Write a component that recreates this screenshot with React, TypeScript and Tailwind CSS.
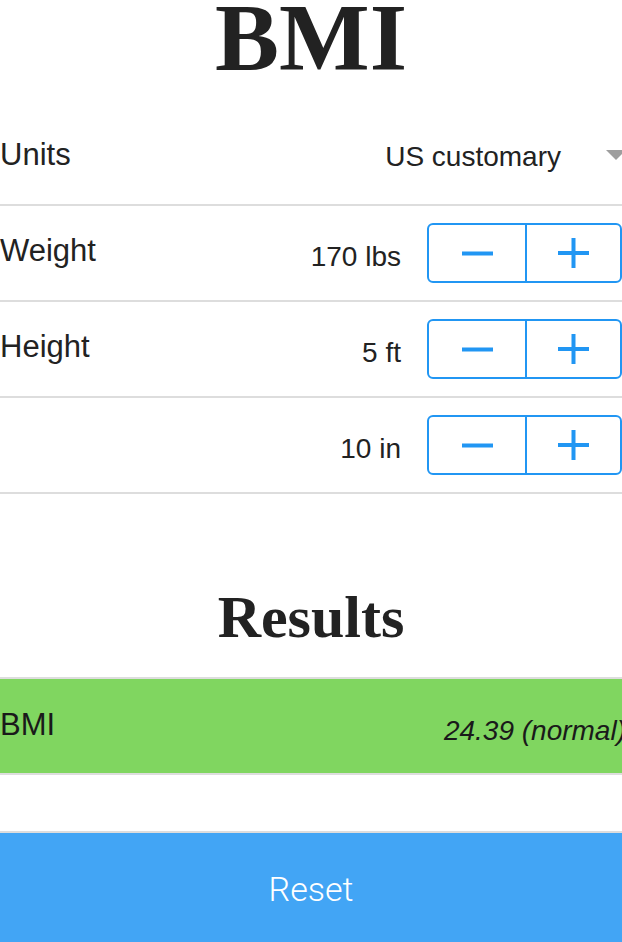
import React from "react";

function Minus() {
  return (
    <svg width="31" height="5" viewBox="0 0 31 5">
      <rect x="0" y="0.5" width="31" height="4" fill="#2196f3" />
    </svg>
  );
}

function Plus() {
  return (
    <svg width="31" height="30" viewBox="0 0 31 30">
      <rect x="0" y="13" width="31" height="4" fill="#2196f3" />
      <rect x="13.5" y="0" width="4" height="30" fill="#2196f3" />
    </svg>
  );
}

function Stepper() {
  return (
    <div className="flex h-[60px] w-[195px] rounded-[6px] border-2 border-[#2196f3]">
      <button className="flex w-[98px] items-center justify-center border-r-2 border-[#2196f3]">
        <Minus />
      </button>
      <button className="flex flex-1 items-center justify-center">
        <Plus />
      </button>
    </div>
  );
}

function StepRow({ label, value }: { label: string; value: string }) {
  return (
    <div className="flex h-[96px] items-center justify-between border-b-2 border-[#dddddd]">
      <div className="pb-[4px] text-[31px]">{label}</div>
      <div className="flex items-center">
        <div className="mr-[26px] pt-[8px] text-[28px]">{value}</div>
        <Stepper />
      </div>
    </div>
  );
}

export default function App() {
  return (
    <div className="h-[942px] w-[622px] overflow-hidden bg-white font-['Liberation_Sans',Arial,sans-serif] text-[#222222]">
      <div className="flex h-[110px] items-start justify-center">
        <h1 className="mt-[-10px] font-['Liberation_Serif',serif] text-[96px] font-bold leading-none">
          BMI
        </h1>
      </div>

      <div className="flex h-[96px] items-center justify-between border-b-2 border-[#dddddd]">
        <div className="pb-[4px] text-[31px]">Units</div>
        <div className="flex items-center">
          <span className="text-[28px]">US customary</span>
          <svg
            className="mb-[4px] ml-[45px] mr-[-4px]"
            width="20"
            height="10"
            viewBox="0 0 20 10"
          >
            <polygon points="0,0 20,0 10,10" fill="#9e9e9e" />
          </svg>
        </div>
      </div>

      <StepRow label="Weight" value="170 lbs" />
      <StepRow label="Height" value="5 ft" />
      <StepRow label="" value="10 in" />

      <div className="flex h-[183px] items-start justify-center pt-[93px]">
        <h2 className="font-['Liberation_Serif',serif] text-[60px] font-bold leading-none">
          Results
        </h2>
      </div>

      <div className="flex h-[98px] items-center justify-between border-y-2 border-[#dddddd] bg-[#80d660] text-[#1a1a1a]">
        <div className="pb-[2px] text-[31px]">BMI</div>
        <div className="mr-[-4px] whitespace-nowrap pt-[10px] text-[28px] italic">24.39 (normal)</div>
      </div>

      <div className="h-[56px]" />

      <button className="flex h-[116px] w-full items-center justify-center border-t-2 border-[#dddddd] bg-[#42a5f5] pb-[2px] font-['Roboto',sans-serif] text-[34px] font-light text-white">
        Reset
      </button>
    </div>
  );
}
